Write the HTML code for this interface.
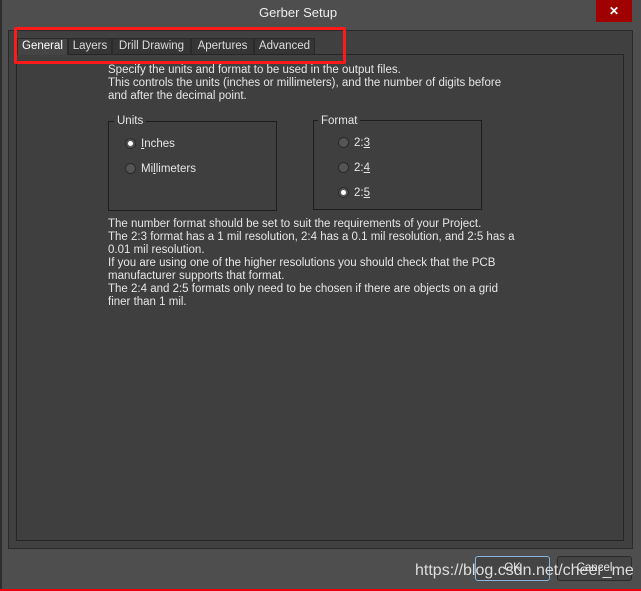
<!DOCTYPE html><html><head><style>
body{margin:0;width:641px;height:591px;background:#4e4e4e;font-family:"Liberation Sans",sans-serif;font-size:11.5px;color:#e6e6e6;position:relative;overflow:hidden}
div{position:absolute;box-sizing:border-box}
.t{white-space:nowrap;line-height:13px}
.tab{top:38px;height:16px;background:#353535;border:1px solid #2a2a2a;border-bottom:none;color:#ddd;text-align:center;line-height:15px;font-size:11.5px}
.g{border:1px solid #1e1e1e}
.r{width:11px;height:11px;border-radius:50%;background:#555;border:1px solid #2a2a2a}
.r.on::after{content:"";position:absolute;left:2px;top:2px;width:5px;height:5px;border-radius:50%;background:#fff}
.btn{top:556px;height:25px;width:75px;border:1px solid #2a2a2a;border-radius:3px;background:#444;text-align:center;line-height:23px}
</style></head><body>
<div style="left:0;top:0;width:2px;height:591px;background:#2e2e2e"></div>
<div class="t" style="left:259px;top:6px;font-size:13px;color:#eee">Gerber Setup</div>
<div style="left:596px;top:0;width:36px;height:22px;background:#a00000;color:#fff;text-align:center;font-weight:bold;font-size:12px;line-height:22px">✕</div>
<div style="left:8px;top:30px;width:625px;height:519px;background:#404040;border:1px solid #2a2a2a"></div>
<div style="left:16px;top:54px;width:608px;height:487px;background:#3f3f3f;border:1px solid #262626"></div>
<div class="tab" style="left:17px;width:51px;background:#454545;color:#fff;height:17px">General</div>
<div class="tab" style="left:68px;width:44px">Layers</div>
<div class="tab" style="left:112px;width:79px">Drill Drawing</div>
<div class="tab" style="left:191px;width:63px">Apertures</div>
<div class="tab" style="left:254px;width:61px">Advanced</div>
<div style="left:14px;top:27px;width:332px;height:37px;border:3px solid #ff1a1a;border-radius:2px"></div>
<div class="t" style="left:108px;top:64px">Specify the units and format to be used in the output files.<br>This controls the units (inches or millimeters), and the number of digits before<br>and after the decimal point.</div>
<div class="g" style="left:108px;top:121px;width:169px;height:90px"></div>
<div class="t" style="left:114px;top:115px;background:#3f3f3f;padding:0 3px">Units</div>
<div class="r on" style="left:125px;top:138px"></div><div class="t" style="left:141px;top:138px"><u>I</u>nches</div>
<div class="r" style="left:125px;top:163px"></div><div class="t" style="left:141px;top:163px">Mi<u>l</u>limeters</div>
<div class="g" style="left:313px;top:120px;width:169px;height:90px"></div>
<div class="t" style="left:318px;top:115px;background:#3f3f3f;padding:0 3px">Format</div>
<div class="r" style="left:338px;top:137px"></div><div class="t" style="left:354px;top:137px">2:<u>3</u></div>
<div class="r" style="left:338px;top:162px"></div><div class="t" style="left:354px;top:162px">2:<u>4</u></div>
<div class="r on" style="left:338px;top:187px"></div><div class="t" style="left:354px;top:187px">2:<u>5</u></div>
<div class="t" style="left:108px;top:218px">The number format should be set to suit the requirements of your Project.<br>The 2:3 format has a 1 mil resolution, 2:4 has a 0.1 mil resolution, and 2:5 has a<br>0.01 mil resolution.<br>If you are using one of the higher resolutions you should check that the PCB<br>manufacturer supports that format.<br>The 2:4 and 2:5 formats only need to be chosen if there are objects on a grid<br>finer than 1 mil.</div>
<div class="btn" style="left:475px;border-color:#8ab4dc">OK</div>
<div class="btn" style="left:557px">Cancel</div>
<div class="t" style="left:415px;top:562px;font-size:16px;line-height:18px;color:#ddd">https://blog.csdn.net/cheer_me</div>
<div style="left:0;top:589px;width:641px;height:2px;background:#e00"></div>
</body></html>
